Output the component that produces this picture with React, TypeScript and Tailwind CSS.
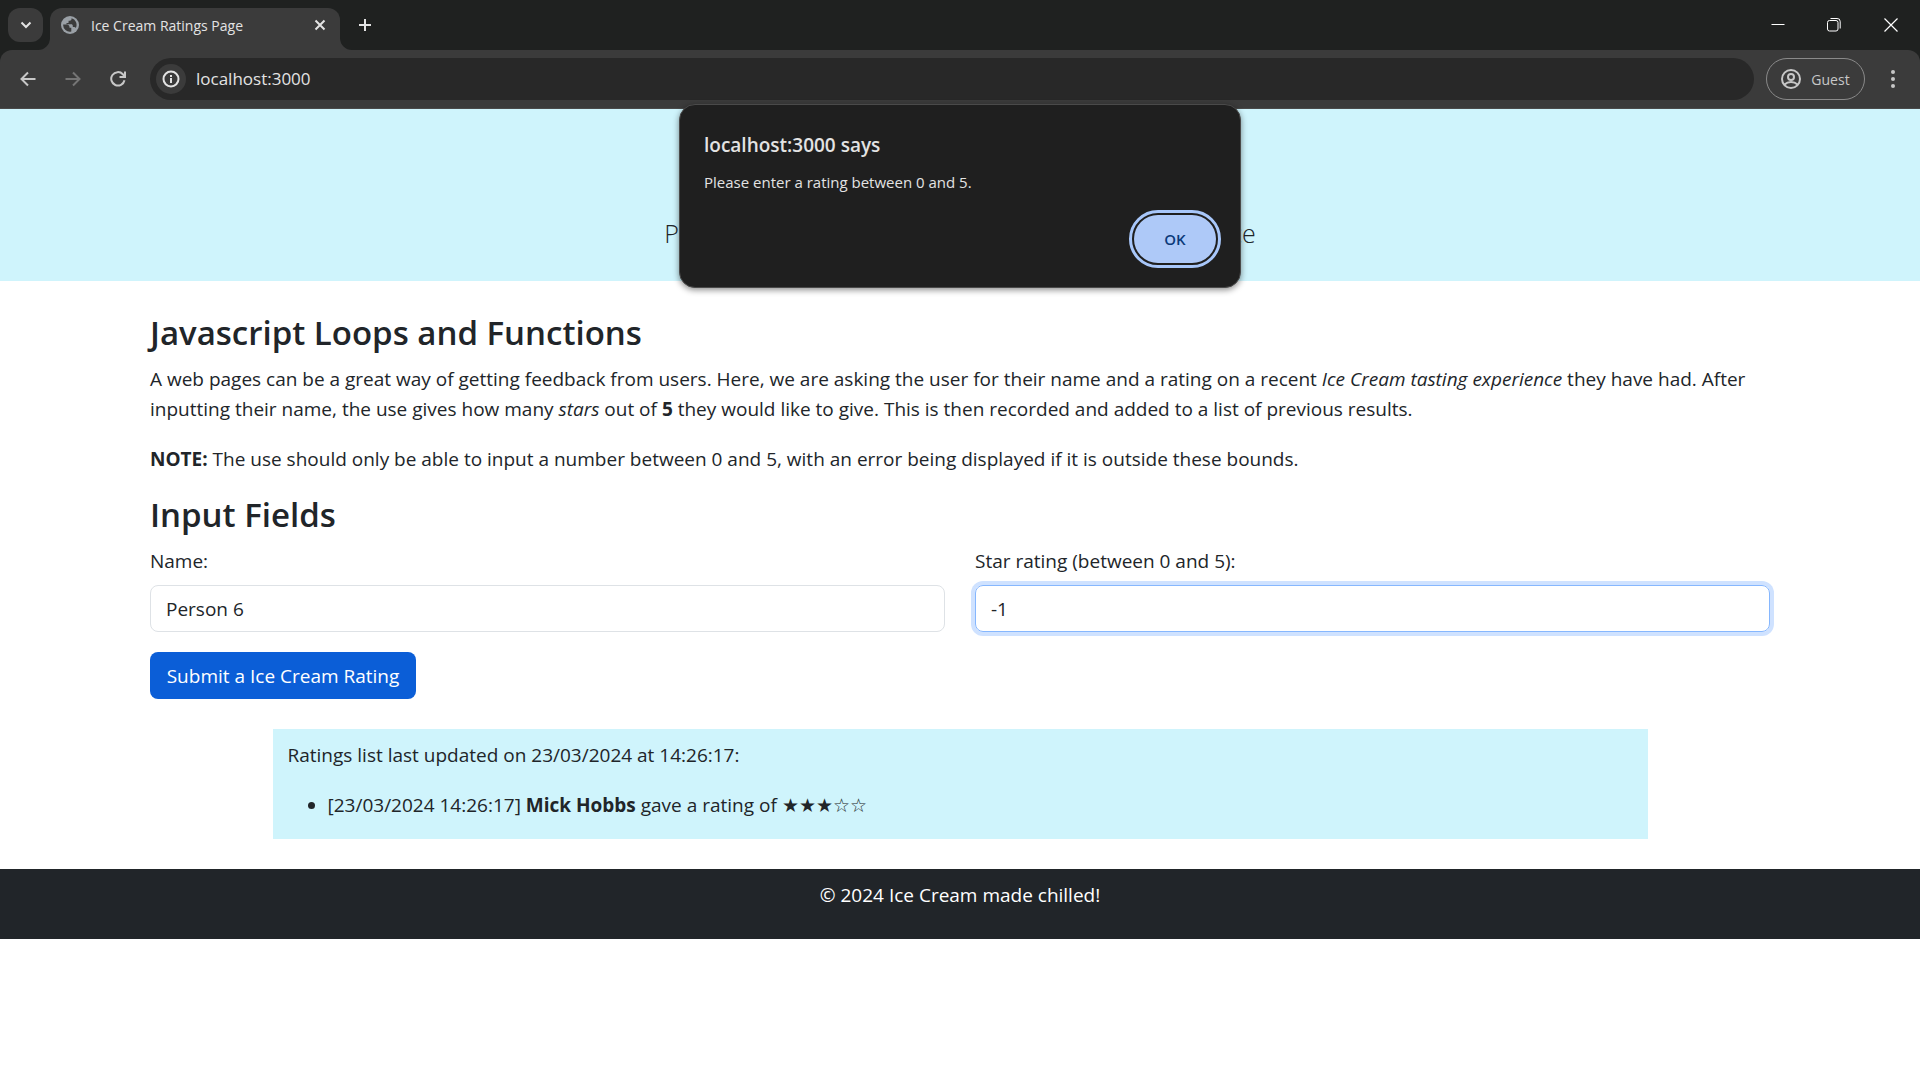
import React from "react";

const stroke = { fill: "none", stroke: "currentColor" } as const;

function TabStrip() {
  return (
    <div className="flex h-[50px] items-start bg-[#1f2120] pl-2 text-[#e3e3e3]">
      <button aria-label="Search tabs" className="mt-2 flex h-[34px] w-[35px] items-center justify-center rounded-xl bg-[#3b3b3b]">
        <svg width="12" height="8" viewBox="0 0 12 8" {...stroke} strokeWidth="2"><path d="M1.5 1.5 6 6l4.500-4.500" /></svg>
      </button>
      <div className="mt-2 flex h-[42px] items-end text-[#3b3b3b]">
        <svg width="12" height="12" viewBox="0 0 12 12" className="-ml-[5px]"><path d="M12 0v12H0A12 12 0 0 0 12 0Z" fill="currentColor" /></svg>
        <div className="flex h-[42px] w-[290px] items-center rounded-t-xl bg-[#3b3b3b] pr-2 pb-2 pl-[11px] text-[#e3e3e3]">
          <svg width="18" height="18" viewBox="0 0 18 18">
            <circle cx="9" cy="9" r="9" fill="#9aa0a6" />
            <path d="M2.200 8.500h3.600c1.500 0 2.700 1 2.700 2.400v.8h1.800v3.900A6.700 6.700 0 0 1 2.200 8.500ZM10.500 2.300v.8c0 1-.8 1.700-1.700 1.700H7.600v1.400c0 .5-.4.900-.9.900H5.500v1.200h4.700c1 0 1.600.6 1.600 1.600v1h1.300c.8 0 1.400.4 1.700 1.100A6.800 6.800 0 0 0 10.500 2.300Z" fill="#3b3b3b" />
          </svg>
          <span className="ml-3 flex-1 text-[14px]">Ice Cream Ratings Page</span>
          <button aria-label="Close tab" className="flex size-6 items-center justify-center">
            <svg width="12" height="12" viewBox="0 0 12 12" {...stroke} strokeWidth="2"><path d="m1.500 1.500 9 9m0-9-9 9" /></svg>
          </button>
        </div>
        <svg width="12" height="12" viewBox="0 0 12 12"><path d="M0 0v12h12A12 12 0 0 1 0 0Z" fill="currentColor" /></svg>
      </div>
      <button aria-label="New tab" className="flex h-[50px] w-[26px] items-center justify-center">
        <svg width="14" height="14" viewBox="0 0 14 14" {...stroke} strokeWidth="2"><path d="M7 1v12M1 7h12" /></svg>
      </button>
      <div className="ml-auto flex h-[50px] text-white">
        <button aria-label="Minimize" className="flex w-14 items-center justify-center">
          <svg width="14" height="14" viewBox="0 0 14 14" {...stroke}><path d="M.5 6.500h13" /></svg>
        </button>
        <button aria-label="Restore" className="flex w-14 items-center justify-center">
          <svg width="14" height="14" viewBox="0 0 14 14" {...stroke}><rect x=".5" y="2.500" width="10.500" height="10.500" rx="2" /><path d="M3.500.5H10A3 3 0 0 1 13.200 3.500V10.500" /></svg>
        </button>
        <button aria-label="Close" className="flex w-[58px] items-center justify-center">
          <svg width="14" height="14" viewBox="0 0 14 14" {...stroke} strokeWidth="1.200"><path d="m.5.5 13 13m0-13-13 13" /></svg>
        </button>
      </div>
    </div>
  );
}

function Toolbar() {
  return (
    <div className="bg-[#1f2120]">
      <div className="flex h-[59px] items-center rounded-t-xl border-b border-[#4a4a4a] bg-[#3b3b3b] pl-[5px] text-[#c7c7c7]">
        <button aria-label="Back" className="flex w-[45px] justify-center">
          <svg width="16" height="16" viewBox="0 0 16 16" {...stroke} strokeWidth="2"><path d="M15.500 8H2M8 1.500 1.500 8 8 14.500" /></svg>
        </button>
        <button aria-label="Forward" disabled className="flex w-[45px] justify-center text-[#757575]">
          <svg width="16" height="16" viewBox="0 0 16 16" {...stroke} strokeWidth="2"><path d="M.5 8H14M8 1.500 14.500 8 8 14.500" /></svg>
        </button>
        <button aria-label="Reload" className="flex w-[45px] justify-center">
          <svg width="16" height="16" viewBox="0 0 16 16" {...stroke} strokeWidth="2"><path d="M14.500 9.200A6.700 6.700 0 1 1 12.800 3.200L14.500 5M15 .5V6H9.500" /></svg>
        </button>
        <div className="ml-[10px] flex h-[42px] flex-1 items-center gap-[10px] rounded-full bg-[#282828] px-[6px]">
          <button aria-label="Site information" className="flex size-[30px] items-center justify-center rounded-full bg-[#3b3b3b] text-[#e3e3e3]">
            <svg width="18" height="18" viewBox="0 0 18 18" {...stroke} strokeWidth="2"><circle cx="9" cy="9" r="7.500" /><path d="M9 8v5M9 5v2" /></svg>
          </button>
          <input aria-label="Address" defaultValue="localhost:3000" className="min-w-0 flex-1 text-[17px] text-[#e3e3e3] outline-none" />
        </div>
        <button className="ml-3 flex h-[42px] w-[99px] items-center justify-center gap-[10px] rounded-full border border-[#8a8a8a] text-[14px]">
          <svg width="20" height="20" viewBox="0 0 20 20" {...stroke} strokeWidth="2"><circle cx="10" cy="10" r="9" /><circle cx="10" cy="8" r="3" /><path d="M3.500 15.500c3.500-3.300 9.500-3.300 13 0" /></svg>
          Guest
        </button>
        <button aria-label="Menu" className="flex w-[55px] justify-center">
          <svg width="4" height="18" viewBox="0 0 4 18" fill="currentColor"><circle cx="2" cy="2" r="2" /><circle cx="2" cy="9" r="2" /><circle cx="2" cy="16" r="2" /></svg>
        </button>
      </div>
    </div>
  );
}

function AlertDialog() {
  return (
    <div role="alertdialog" aria-labelledby="alert-title" aria-describedby="alert-text" className="absolute top-[104px] left-1/2 w-[562px] -translate-x-1/2 rounded-2xl border border-[#4a4a4a] bg-[#1f1f1f] px-6 pt-6 pb-6 text-[#e3e3e3] shadow-[0_2px_6px_rgba(0,0,0,0.45)]">
      <h2 id="alert-title" className="text-[19px] leading-8 font-semibold">localhost:3000 says</h2>
      <p id="alert-text" className="mt-2 text-[15px] leading-[26px]">Please enter a rating between 0 and 5.</p>
      <div className="mt-5 flex justify-end">
        <button className="h-[48px] w-[82px] rounded-full bg-[#aec9f8] text-[15px] font-semibold text-[#0b3a7a] outline-[3px] outline-offset-2 outline-[#a8c7fa]">OK</button>
      </div>
    </div>
  );
}

function RatingForm() {
  return (
    <form onSubmit={(event) => event.preventDefault()}>
      <div className="grid grid-cols-2 gap-[30px]">
        <div>
          <label htmlFor="name" className="mb-[9px] block">Name:</label>
          <input id="name" defaultValue="Person 6" className="block h-[47px] w-full rounded-lg border border-[#dee2e6] px-[15px]" />
        </div>
        <div>
          <label htmlFor="rating" className="mb-[9px] block">Star rating (between 0 and 5):</label>
          <input id="rating" defaultValue="-1" className="block h-[47px] w-full rounded-lg border border-[#86b7fe] px-[15px] ring-4 ring-[#cfe2ff] outline-none" />
        </div>
      </div>
      <button type="submit" className="mt-5 h-[47px] w-[266px] rounded-lg bg-[#0b5ed7] whitespace-nowrap text-white">Submit a Ice Cream Rating</button>
    </form>
  );
}

export default function App() {
  return (
    <div className="relative min-h-screen bg-white font-['Open_Sans','Noto_Sans',sans-serif] text-[#212529]">
      <TabStrip />
      <Toolbar />
      <header className="flex h-[172px] flex-col items-center justify-end bg-[#cff4fc] pb-[29px]">
        <p className="text-[25px] leading-[38px] font-light">Please rate your recent Ice Cream tasting experience</p>
      </header>
      <main className="mx-auto max-w-[1650px] px-[15px] pt-[31px] text-[19px] leading-[30px]">
        <h3 className="mb-[10px] text-[33px] leading-[42px] font-semibold">Javascript Loops and Functions</h3>
        <p className="mb-5">
          A web pages can be a great way of getting feedback from users. Here, we are asking the user for their name and a rating on a recent <em>Ice Cream tasting experience</em> they have had. After inputting their name, the use gives how many <em>stars</em> out of <strong>5</strong> they would like to give. This is then recorded and added to a list of previous results.
        </p>
        <p className="mb-5"><strong>NOTE:</strong> The use should only be able to input a number between 0 and 5, with an error being displayed if it is outside these bounds.</p>
        <h3 className="mb-[10px] text-[33px] leading-[42px] font-semibold">Input Fields</h3>
        <RatingForm />
        <section className="mx-auto mt-[30px] mb-[30px] max-w-[1375px] bg-[#cff4fc] px-[15px] pt-[11px] pb-[19px]">
          <p className="mb-5">Ratings list last updated on 23/03/2024 at 14:26:17:</p>
          <ul className="list-disc pl-10">
            <li>[23/03/2024 14:26:17] <strong>Mick Hobbs</strong> gave a rating of ★★★☆☆</li>
          </ul>
        </section>
      </main>
      <footer className="bg-[#212529] pt-[11px] pb-[29px] text-center text-[19px] leading-[30px] text-white">© 2024 Ice Cream made chilled!</footer>
      <AlertDialog />
    </div>
  );
}
